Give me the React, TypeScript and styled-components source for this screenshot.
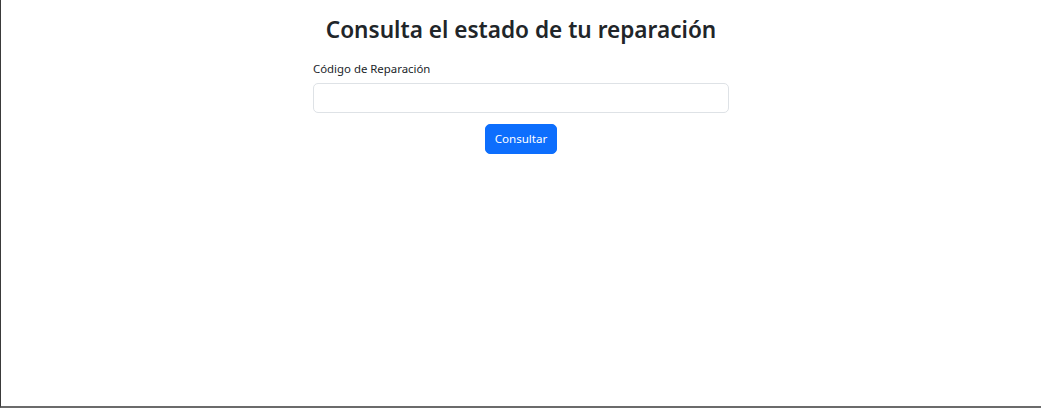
import React from "react";
import styled, { createGlobalStyle } from "styled-components";

const Global = createGlobalStyle`
  html, body { margin: 0; padding: 0; background: #fff; }
  body { font-family: "Noto Sans", "Open Sans", sans-serif; color: #212529; }
  * { box-sizing: border-box; }
`;

const Page = styled.div`
  height: 408px;
  border-left: 1px solid #3a3a3a;
  border-bottom: 2px solid #6b6b6b;
  padding-top: 16px;
`;

const Container = styled.div`
  width: 416px;
  margin: 0 auto;
  display: flex;
  flex-direction: column;
`;

const Title = styled.h2`
  margin: 0 -40px 16px;
  font-size: 22.6px;
  font-weight: 600;
  line-height: 1.22;
  text-align: center;
  color: #212529;
`;

const Label = styled.label`
  font-size: 11.4px;
  line-height: 1.5;
  margin-bottom: 6px;
  color: #212529;
`;

const Input = styled.input`
  height: 30px;
  width: 100%;
  border: 1px solid #dee2e6;
  border-radius: 5px;
  padding: 4px 10px;
  font: inherit;
  font-size: 12px;
  outline: none;
`;

const Actions = styled.div`
  display: flex;
  justify-content: center;
  margin-top: 11px;
`;

const Button = styled.button`
  height: 30px;
  width: 72px;
  padding: 0;
  background: #0d6efd;
  color: #fff;
  border: 1px solid #0d6efd;
  border-radius: 5px;
  font: inherit;
  font-size: 11.6px;
  cursor: pointer;
`;

export default function App() {
  return (
    <>
      <Global />
      <Page>
        <Container>
          <Title>Consulta el estado de tu reparación</Title>
          <Label htmlFor="codigo">Código de Reparación</Label>
          <Input id="codigo" type="text" />
          <Actions>
            <Button type="button">Consultar</Button>
          </Actions>
        </Container>
      </Page>
    </>
  );
}
